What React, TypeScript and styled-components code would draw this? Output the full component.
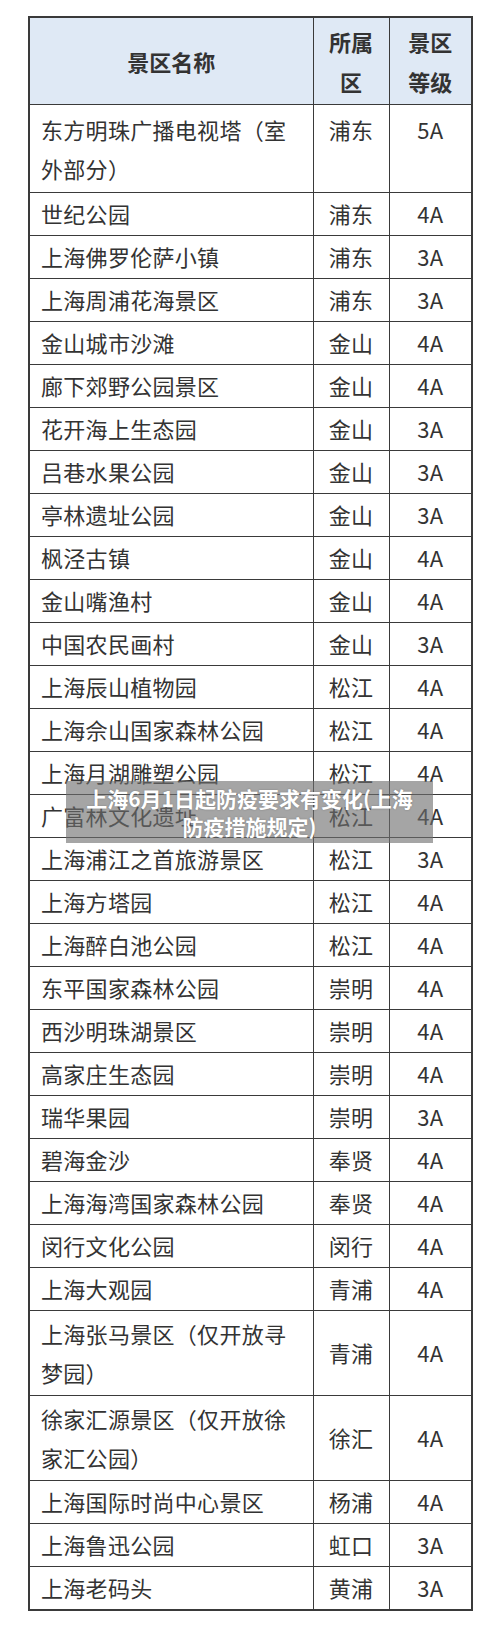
import React from 'react'
import styled, { createGlobalStyle } from 'styled-components'

const GlobalStyle = createGlobalStyle`
  html, body {
    margin: 0;
    padding: 0;
    background: #fff;
  }
  body {
    font-family: "Noto Sans CJK SC", "Noto Sans", sans-serif;
    color: #333;
  }
`

const Page = styled.div`
  position: relative;
  width: 500px;
  padding: 16px 0 12px 28px;
  box-sizing: border-box;
`

const Table = styled.table`
  border-collapse: collapse;
  width: 443px;
  table-layout: fixed;
  border: 2px solid #3a3a3a;
`

const HeadCell = styled.th<{ $w: number }>`
  box-sizing: border-box;
  width: ${(p) => p.$w}px;
  background: #dfe9f5;
  border: 1.5px solid #3a3a3a;
  font-weight: 700;
  font-size: 22px;
  line-height: 40px;
  height: 87px;
  padding: 0 12px;
  text-align: center;
  color: #333;
`

const Cell = styled.td<{ $center?: boolean; $top?: boolean; $tall?: boolean }>`
  border: 1.5px solid #3a3a3a;
  font-size: 22px;
  letter-spacing: 0.3px;
  line-height: 39px;
  height: ${(p) => (p.$tall ? '82px' : '40px')};
  padding: ${(p) => (p.$top ? '5px 11px 0' : '1px 11px')};
  text-align: ${(p) => (p.$center ? 'center' : 'left')};
  vertical-align: ${(p) => (p.$top ? 'top' : 'middle')};
  color: #333;
`

const Caption = styled.div`
  position: absolute;
  left: 66px;
  top: 781px;
  width: 367px;
  height: 62px;
  box-sizing: border-box;
  padding: 3px 14px 0;
  background: rgba(110, 110, 110, 0.62);
  color: #fff;
  font-weight: 700;
  font-size: 21px;
  line-height: 28px;
  text-align: center;
  text-shadow: 0 0 2px rgba(0, 0, 0, 0.25);
`

type Row = { name: string; district: string; level: string; tall?: boolean; top?: boolean }

const rows: Row[] = [
  { name: '东方明珠广播电视塔（室外部分）', district: '浦东', level: '5A', tall: true, top: true },
  { name: '世纪公园', district: '浦东', level: '4A' },
  { name: '上海佛罗伦萨小镇', district: '浦东', level: '3A' },
  { name: '上海周浦花海景区', district: '浦东', level: '3A' },
  { name: '金山城市沙滩', district: '金山', level: '4A' },
  { name: '廊下郊野公园景区', district: '金山', level: '4A' },
  { name: '花开海上生态园', district: '金山', level: '3A' },
  { name: '吕巷水果公园', district: '金山', level: '3A' },
  { name: '亭林遗址公园', district: '金山', level: '3A' },
  { name: '枫泾古镇', district: '金山', level: '4A' },
  { name: '金山嘴渔村', district: '金山', level: '4A' },
  { name: '中国农民画村', district: '金山', level: '3A' },
  { name: '上海辰山植物园', district: '松江', level: '4A' },
  { name: '上海佘山国家森林公园', district: '松江', level: '4A' },
  { name: '上海月湖雕塑公园', district: '松江', level: '4A' },
  { name: '广富林文化遗址', district: '松江', level: '4A' },
  { name: '上海浦江之首旅游景区', district: '松江', level: '3A' },
  { name: '上海方塔园', district: '松江', level: '4A' },
  { name: '上海醉白池公园', district: '松江', level: '4A' },
  { name: '东平国家森林公园', district: '崇明', level: '4A' },
  { name: '西沙明珠湖景区', district: '崇明', level: '4A' },
  { name: '高家庄生态园', district: '崇明', level: '4A' },
  { name: '瑞华果园', district: '崇明', level: '3A' },
  { name: '碧海金沙', district: '奉贤', level: '4A' },
  { name: '上海海湾国家森林公园', district: '奉贤', level: '4A' },
  { name: '闵行文化公园', district: '闵行', level: '4A' },
  { name: '上海大观园', district: '青浦', level: '4A' },
  { name: '上海张马景区（仅开放寻梦园）', district: '青浦', level: '4A', tall: true },
  { name: '徐家汇源景区（仅开放徐家汇公园）', district: '徐汇', level: '4A', tall: true },
  { name: '上海国际时尚中心景区', district: '杨浦', level: '4A' },
  { name: '上海鲁迅公园', district: '虹口', level: '3A' },
  { name: '上海老码头', district: '黄浦', level: '3A' },
]

export default function App() {
  return (
    <>
      <GlobalStyle />
      <Page>
        <Table>
          <thead>
            <tr>
              <HeadCell $w={284}>景区名称</HeadCell>
              <HeadCell $w={76}>所属区</HeadCell>
              <HeadCell $w={83}>景区等级</HeadCell>
            </tr>
          </thead>
          <tbody>
            {rows.map((r) => (
              <tr key={r.name}>
                <Cell $tall={r.tall} $top={r.top}>{r.name}</Cell>
                <Cell $center $tall={r.tall} $top={r.top}>{r.district}</Cell>
                <Cell $center $tall={r.tall} $top={r.top}>{r.level}</Cell>
              </tr>
            ))}
          </tbody>
        </Table>
        <Caption>上海6月1日起防疫要求有变化(上海防疫措施规定)</Caption>
      </Page>
    </>
  )
}
